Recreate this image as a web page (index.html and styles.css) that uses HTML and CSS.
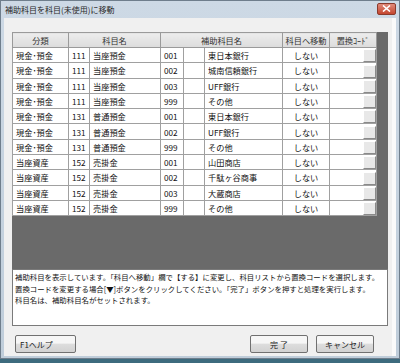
FILE: index.html
```html
<!DOCTYPE html>
<html>
<head>
    <title>補助科目を科目(未使用)に移動</title>
    <meta charset="UTF-8">
    <link rel="stylesheet" href="styles.css">
</head>
<body>
    <div class="window">
        <div class="titlebar">
            <span class="title">補助科目を科目(未使用)に移動</span>
            <span class="close">
                <svg width="9" height="7" viewBox="0 0 9 7"><path d="M1 0.5 L8 6.5 M8 0.5 L1 6.5" stroke="#fff" stroke-width="1.6"/></svg>
            </span>
        </div>
        <div class="body">
            <div class="grid-area">
                <table class="grid">
                    <colgroup>
                        <col style="width:56px"><col style="width:21px"><col style="width:71px">
                        <col style="width:23px"><col style="width:21px"><col style="width:78px">
                        <col style="width:47px"><col style="width:47px">
                    </colgroup>
                    <tr class="head">
                        <th>分類</th>
                        <th colspan="2">科目名</th>
                        <th colspan="3">補助科目名</th>
                        <th>科目へ移動</th>
                        <th>置換ｺｰﾄﾞ</th>
                    </tr>
                    <tr><td>現金･預金</td><td>111</td><td>当座預金</td><td>001</td><td></td><td>東日本銀行</td><td class="c">しない</td><td class="btn-cell"><span class="cell-btn"></span></td></tr>
                    <tr><td>現金･預金</td><td>111</td><td>当座預金</td><td>002</td><td></td><td>城南信頼銀行</td><td class="c">しない</td><td class="btn-cell"><span class="cell-btn"></span></td></tr>
                    <tr><td>現金･預金</td><td>111</td><td>当座預金</td><td>003</td><td></td><td>UFF銀行</td><td class="c">しない</td><td class="btn-cell"><span class="cell-btn"></span></td></tr>
                    <tr><td>現金･預金</td><td>111</td><td>当座預金</td><td>999</td><td></td><td>その他</td><td class="c">しない</td><td class="btn-cell"><span class="cell-btn"></span></td></tr>
                    <tr><td>現金･預金</td><td>131</td><td>普通預金</td><td>001</td><td></td><td>東日本銀行</td><td class="c">しない</td><td class="btn-cell"><span class="cell-btn"></span></td></tr>
                    <tr><td>現金･預金</td><td>131</td><td>普通預金</td><td>002</td><td></td><td>UFF銀行</td><td class="c">しない</td><td class="btn-cell"><span class="cell-btn"></span></td></tr>
                    <tr><td>現金･預金</td><td>131</td><td>普通預金</td><td>999</td><td></td><td>その他</td><td class="c">しない</td><td class="btn-cell"><span class="cell-btn"></span></td></tr>
                    <tr><td>当座資産</td><td>152</td><td>売掛金</td><td>001</td><td></td><td>山田商店</td><td class="c">しない</td><td class="btn-cell"><span class="cell-btn"></span></td></tr>
                    <tr><td>当座資産</td><td>152</td><td>売掛金</td><td>002</td><td></td><td>千駄ヶ谷商事</td><td class="c">しない</td><td class="btn-cell"><span class="cell-btn"></span></td></tr>
                    <tr><td>当座資産</td><td>152</td><td>売掛金</td><td>003</td><td></td><td>大蔵商店</td><td class="c">しない</td><td class="btn-cell"><span class="cell-btn"></span></td></tr>
                    <tr><td>当座資産</td><td>152</td><td>売掛金</td><td>999</td><td></td><td>その他</td><td class="c">しない</td><td class="btn-cell"><span class="cell-btn"></span></td></tr>
                </table>
            </div>
            <div class="message">
                補助科目を表示しています。「科目へ移動」欄で【する】に変更し、科目リストから置換コードを選択します。<br>
                置換コードを変更する場合[▼]ボタンをクリックしてください。「完了」ボタンを押すと処理を実行します。<br>
                科目名は、補助科目名がセットされます。
            </div>
            <div class="buttons">
                <button class="btn help">F1ヘルプ</button>
                <div class="right-buttons">
                    <button class="btn">完 了</button>
                    <button class="btn">キャンセル</button>
                </div>
            </div>
        </div>
    </div>
</body>
</html>
```

FILE: styles.css
```css
body {
    margin: 0;
    font-family: "Noto Sans CJK JP", sans-serif;
    color: #111;
    background-color: #3d6b7e;
}
.window {
    width: 400px;
    height: 359px;
    box-sizing: border-box;
    background: linear-gradient(#cdd9e5, #bfcdda);
    border: 1px solid #6f7e8c;
    padding: 0 3px 3px 3px;
}
.titlebar {
    height: 17px;
    display: flex;
    align-items: center;
    justify-content: space-between;
}
.title {
    font-size: 8px;
    padding-left: 1px;
    color: #2a2a2a;
}
.close {
    width: 17px;
    height: 10px;
    margin-top: -2px;
    background: linear-gradient(#e08a7a, #c4462f);
    border: 1px solid #8a3a2c;
    border-radius: 2px;
    display: flex;
    align-items: center;
    justify-content: center;
}
.body {
    background-color: #f0f0f0;
    height: 338px;
    box-sizing: border-box;
    padding: 14px 0 0 8px;
    border-right: 4px solid #fafafa;
}
.grid-area {
    width: 376px;
    height: 237px;
    background-color: #6a6a6a;
}
.grid {
    border-collapse: collapse;
    table-layout: fixed;
    width: 364px;
    font-size: 8.2px;
}
.grid th {
    height: 14px;
    font-weight: normal;
    background: linear-gradient(#ececec, #dcdcdc);
    border: 1px solid #9a9a9a;
    color: #333;
    padding: 0;
}
.grid td {
    height: 13.7px;
    background-color: white;
    border: 1px solid #a0a0a0;
    padding: 0 0 0 3px;
    white-space: nowrap;
    overflow: hidden;
}
.grid td.c {
    text-align: center;
    padding: 0;
}
.grid td.btn-cell {
    text-align: right;
    padding: 0;
    vertical-align: middle;
}
.cell-btn {
    display: inline-block;
    width: 11px;
    height: 11px;
    vertical-align: middle;
    background-color: #e8e8e8;
    border: 1px solid;
    border-color: #fff #8a8a8a #8a8a8a #fff;
}
.message {
    width: 376px;
    height: 57px;
    box-sizing: border-box;
    background-color: white;
    border: 1px solid #7a7a7a;
    font-size: 7.4px;
    line-height: 11.5px;
    padding: 1px 2px;
    white-space: nowrap;
    overflow: hidden;
}
.buttons {
    display: flex;
    justify-content: space-between;
    width: 359px;
    padding: 9px 0 0 3px;
}
.right-buttons {
    display: flex;
    gap: 8px;
}
.btn {
    height: 18px;
    width: 58px;
    font-family: "Noto Sans CJK JP", sans-serif;
    font-size: 8px;
    color: #222;
    background: linear-gradient(#f6f6f6 45%, #dddddd 50%, #d2d2d2);
    border: 1px solid #707070;
    border-radius: 2px;
    padding: 0;
}
.btn.help {
    width: 61px;
    text-align: left;
    padding-left: 4px;
}
```
